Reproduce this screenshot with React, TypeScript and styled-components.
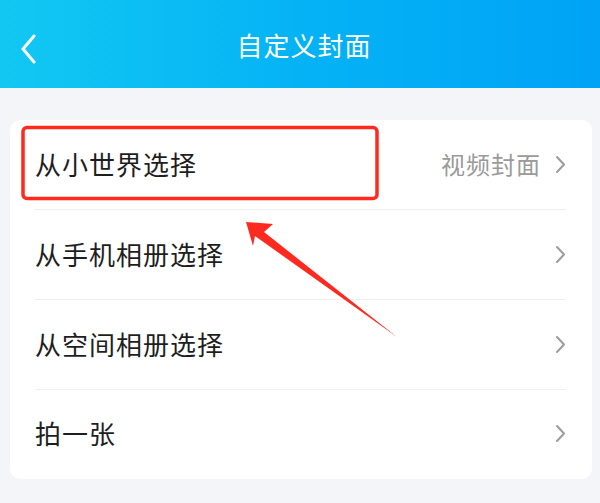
import React from 'react';
import styled, {createGlobalStyle} from 'styled-components';

const GlobalStyle = createGlobalStyle`
  html, body {
    margin: 0;
    padding: 0;
    background: #f4f5f9;
    font-family: "Noto Sans CJK SC", "Noto Sans", sans-serif;
  }
`;

const Page = styled.div`
  position: relative;
  width: 600px;
  height: 503px;
  overflow: hidden;
  background: #f4f5f9;
`;

const Header = styled.header`
  height: 88px;
  display: flex;
  align-items: center;
  justify-content: center;
  position: relative;
  background: linear-gradient(90deg, #12c8f2 0%, #05b3f5 50%, #00a3f6 100%);
  color: #ffffff;
`;

const BackButton = styled.button`
  position: absolute;
  left: 14px;
  top: 31px;
  width: 28px;
  height: 36px;
  border: none;
  background: none;
  padding: 0;
  display: flex;
  align-items: center;
  justify-content: center;
`;

const Title = styled.h1`
  margin: 0 0 0 8px;
  font-size: 26px;
  font-weight: 400;
  letter-spacing: 1px;
`;

const Body = styled.main`
  padding: 32px 8px 0 10px;
`;

const Card = styled.div`
  background: #ffffff;
  border-radius: 10px;
  padding: 0 26px 0 25px;
`;

const Row = styled.div<{$last?: boolean}>`
  height: ${({$last}) => ($last ? '87px' : '89px')};
  display: flex;
  align-items: center;
  padding-bottom: ${({$last}) => ($last ? '2px' : '0')};
  border-bottom: ${({$last}) => ($last ? 'none' : '1px solid #eeeff2')};
`;

const Label = styled.span`
  flex: 1;
  font-size: 26px;
  color: #1e1e1e;
  letter-spacing: 1px;
  margin-top: -2px;
`;

const Extra = styled.span`
  font-size: 24px;
  color: #9a9a9a;
  margin-right: 14px;
  letter-spacing: 1px;
  margin-top: -2px;
`;

const Overlay = styled.svg`
  position: absolute;
  left: 0;
  top: 0;
  pointer-events: none;
`;

const Chevron: React.FC<{color: string; w: number; h: number; stroke: number}> = ({color, w, h, stroke}) => (
    <svg width={w} height={h} viewBox={`0 0 ${w} ${h}`} fill="none">
        <path d={`M${stroke} ${stroke} L${w - stroke} ${h / 2} L${stroke} ${h - stroke}`} stroke={color}
              strokeWidth={stroke} strokeLinecap="round" strokeLinejoin="round"/>
    </svg>
);

const items = [
    {label: '从小世界选择', extra: '视频封面'},
    {label: '从手机相册选择'},
    {label: '从空间相册选择'},
    {label: '拍一张'},
];

const App: React.FC = () => {
    return (
        <Page>
            <GlobalStyle/>
            <Header>
                <BackButton aria-label="back">
                    <svg width="18" height="30" viewBox="0 0 18 30" fill="none">
                        <path d="M15 2 L4 15 L15 28" stroke="#ffffff" strokeWidth="3" strokeLinecap="round"
                              strokeLinejoin="round"/>
                    </svg>
                </BackButton>
                <Title>自定义封面</Title>
            </Header>
            <Body>
                <Card>
                    {items.map((it, i) => (
                        <Row key={it.label} $last={i === items.length - 1}>
                            <Label>{it.label}</Label>
                            {it.extra && <Extra>{it.extra}</Extra>}
                            <Chevron color="#9c9c9c" w={11} h={19} stroke={2}/>
                        </Row>
                    ))}
                </Card>
            </Body>
            {/* annotation: red highlight box + arrow */}
            <Overlay width="600" height="503">
                <rect x="23" y="127.5" width="354" height="71" rx="4" fill="none" stroke="#ff2a1f" strokeWidth="3.5"/>
                <polygon points="246,222 273,224 264,232 397,337 255,236 253,246" fill="#ff2a1f"/>
            </Overlay>
        </Page>
    );
};

export default App;
